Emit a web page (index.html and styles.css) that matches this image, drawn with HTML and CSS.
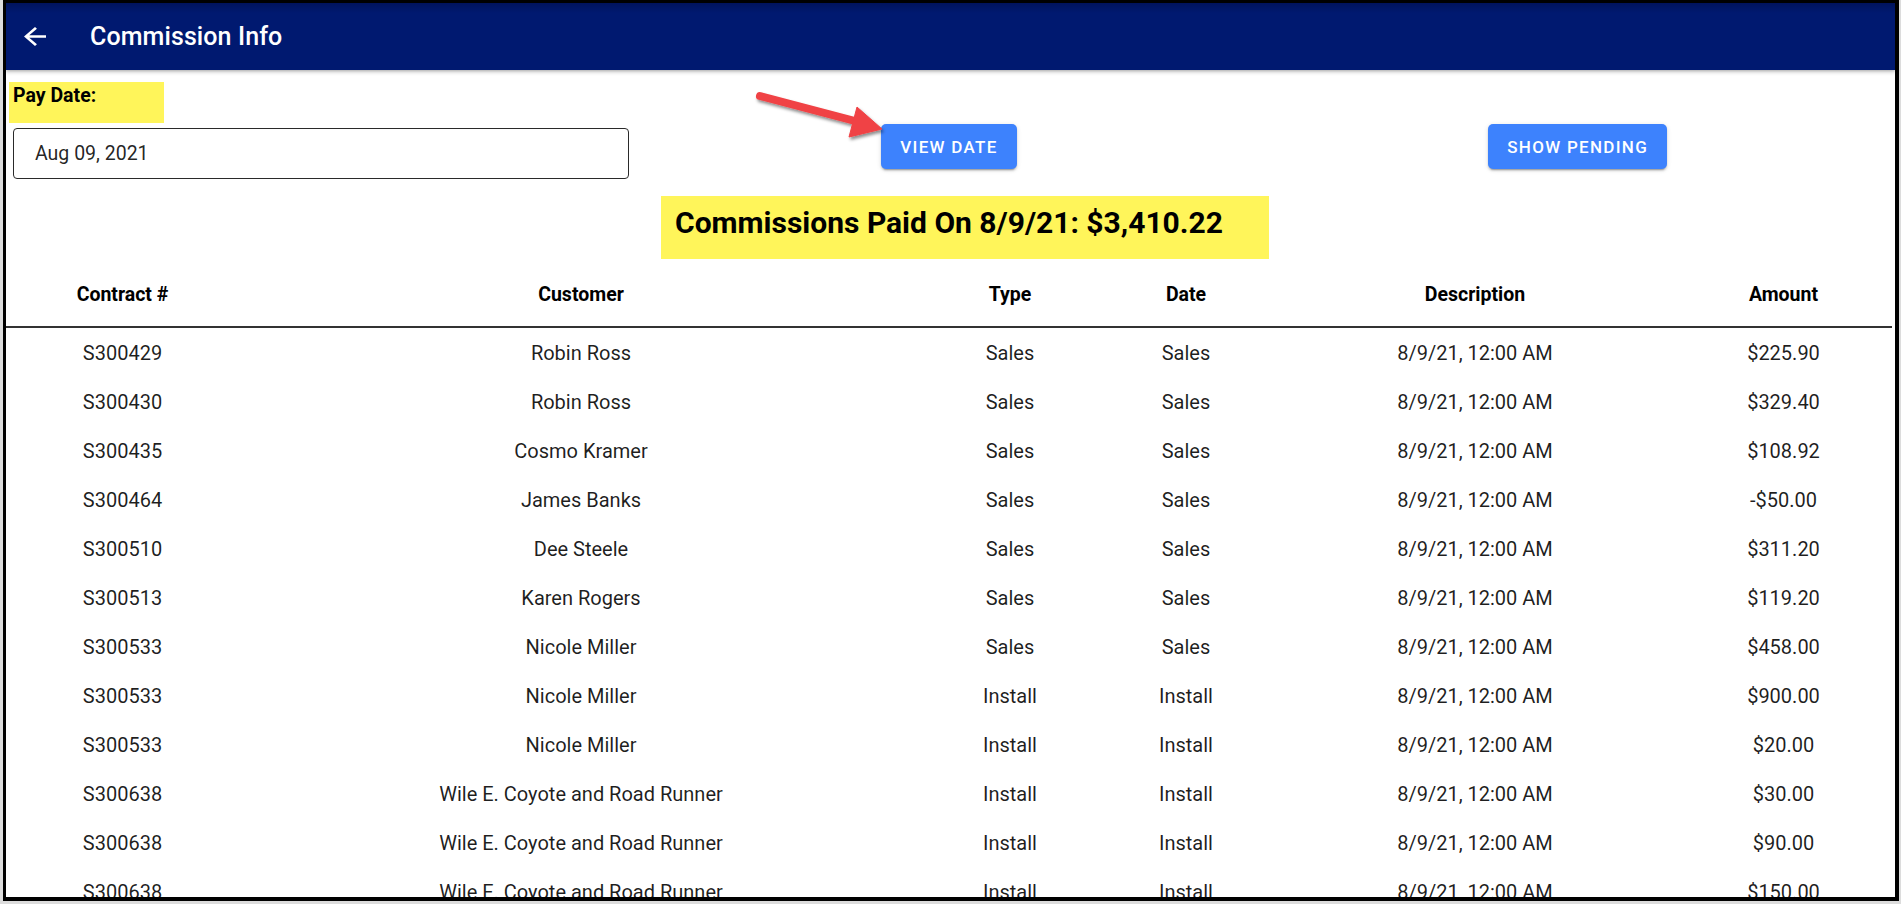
FILE: index.html
```html
<!DOCTYPE html>
<html lang="en">
<head>
<meta charset="utf-8">
<title>Commission Info</title>
<link rel="stylesheet" href="styles.css">
</head>
<body>
<div class="frame">
  <header class="toolbar">
    <svg class="back-icon" viewBox="4 4 16 16" preserveAspectRatio="none" width="22" height="19" aria-hidden="true">
      <path d="M20 11H7.83l5.59-5.59L12 4l-8 8 8 8 1.41-1.41L7.83 13H20v-2z" fill="#ffffff"/>
    </svg>
    <span class="title">Commission Info</span>
  </header>
  <main class="content">
    <div class="controls">
      <div class="date-col">
        <div class="label-wrap"><span class="label">Pay Date:</span></div>
        <div class="date-input">Aug 09, 2021</div>
      </div>
      <div class="btn-col"><button class="btn">VIEW DATE</button></div>
      <div class="btn-col"><button class="btn">SHOW PENDING</button></div>
    </div>
    <div class="heading-row">
      <h2 class="heading">Commissions Paid On 8/9/21: $3,410.22</h2>
    </div>
    <table class="table">
      <colgroup>
        <col class="c-contract"><col class="c-customer"><col class="c-type"><col class="c-date"><col class="c-desc"><col class="c-amount">
      </colgroup>
      <thead>
        <tr><th>Contract #</th><th>Customer</th><th>Type</th><th>Date</th><th>Description</th><th>Amount</th></tr>
      </thead>
      <tbody>
        <tr><td>S300429</td><td>Robin Ross</td><td>Sales</td><td>Sales</td><td>8/9/21, 12:00 AM</td><td>$225.90</td></tr>
        <tr><td>S300430</td><td>Robin Ross</td><td>Sales</td><td>Sales</td><td>8/9/21, 12:00 AM</td><td>$329.40</td></tr>
        <tr><td>S300435</td><td>Cosmo Kramer</td><td>Sales</td><td>Sales</td><td>8/9/21, 12:00 AM</td><td>$108.92</td></tr>
        <tr><td>S300464</td><td>James Banks</td><td>Sales</td><td>Sales</td><td>8/9/21, 12:00 AM</td><td>-$50.00</td></tr>
        <tr><td>S300510</td><td>Dee Steele</td><td>Sales</td><td>Sales</td><td>8/9/21, 12:00 AM</td><td>$311.20</td></tr>
        <tr><td>S300513</td><td>Karen Rogers</td><td>Sales</td><td>Sales</td><td>8/9/21, 12:00 AM</td><td>$119.20</td></tr>
        <tr><td>S300533</td><td>Nicole Miller</td><td>Sales</td><td>Sales</td><td>8/9/21, 12:00 AM</td><td>$458.00</td></tr>
        <tr><td>S300533</td><td>Nicole Miller</td><td>Install</td><td>Install</td><td>8/9/21, 12:00 AM</td><td>$900.00</td></tr>
        <tr><td>S300533</td><td>Nicole Miller</td><td>Install</td><td>Install</td><td>8/9/21, 12:00 AM</td><td>$20.00</td></tr>
        <tr><td>S300638</td><td>Wile E. Coyote and Road Runner</td><td>Install</td><td>Install</td><td>8/9/21, 12:00 AM</td><td>$30.00</td></tr>
        <tr><td>S300638</td><td>Wile E. Coyote and Road Runner</td><td>Install</td><td>Install</td><td>8/9/21, 12:00 AM</td><td>$90.00</td></tr>
        <tr><td>S300638</td><td>Wile E. Coyote and Road Runner</td><td>Install</td><td>Install</td><td>8/9/21, 12:00 AM</td><td>$150.00</td></tr>
      </tbody>
    </table>
  </main>
  <svg class="annot-arrow" viewBox="0 0 160 65" width="160" height="65" aria-hidden="true">
    <defs>
      <filter id="sh" x="-20%" y="-40%" width="140%" height="180%">
        <feDropShadow dx="1.5" dy="2.5" stdDeviation="1.6" flood-color="#000" flood-opacity="0.45"/>
      </filter>
    </defs>
    <g filter="url(#sh)" fill="#f04245" stroke="#f04245">
      <line x1="20" y1="16" x2="115" y2="41" stroke-width="8" stroke-linecap="round"/>
      <polygon points="142,49 117,27 109,57" stroke-width="1" stroke-linejoin="round"/>
    </g>
  </svg>
</div>
</body>
</html>
```

FILE: styles.css
```css
html, body {
  margin: 0;
  padding: 0;
}
body {
  background: #dcdcdc;
  font-family: Roboto, "Noto Sans", "Liberation Sans", sans-serif;
  color: rgba(0, 0, 0, 0.9);
  overflow: hidden;
}
.frame {
  position: relative;
  margin-left: 3px;
  width: 1889px;
  height: 894px;
  border-style: solid;
  border-color: #000;
  border-width: 3px 4px 4px 3px;
  background: #fff;
  overflow: hidden;
}
.toolbar {
  height: 67px;
  background: #001970;
  background-image: linear-gradient(to bottom, #00135c 0, #001970 10px);
  display: flex;
  align-items: center;
  padding-left: 18px;
  box-shadow: 0 2px 4px rgba(0, 0, 0, 0.22), 0 1px 2px rgba(0, 0, 0, 0.12);
  position: relative;
  z-index: 1;
}
.back-icon {
  display: block;
  flex: none;
}
.title {
  margin-left: 44px;
  color: #fff;
  font-size: 25px;
  font-weight: 500;
  letter-spacing: 0.1px;
}
.content {
  padding: 12px 3px 0 0;
}
.controls {
  display: grid;
  grid-template-columns: 1fr 1fr 1fr;
}
.label-wrap {
  margin-left: 3px;
}
.label {
  display: inline-block;
  background: #fff55a;
  font-size: 19.5px;
  font-weight: 700;
  line-height: 22px;
  padding: 3px 68px 16px 4px;
  color: #000;
}
.date-input {
  box-sizing: border-box;
  margin: 5px 6px 0 7px;
  height: 51px;
  border: 1px solid #2a2a2a;
  border-radius: 4px;
  padding-left: 21px;
  display: flex;
  align-items: center;
  font-size: 19.5px;
  color: rgba(0, 0, 0, 0.87);
}
.btn-col {
  display: flex;
  justify-content: center;
  align-items: flex-start;
}
.btn {
  margin-top: 42px;
  height: 45px;
  padding: 0 19px;
  border: 0;
  border-radius: 5px;
  background: #3d82fd;
  color: #fff;
  font-family: Roboto, "Noto Sans", sans-serif;
  font-size: 17px;
  font-weight: 500;
  letter-spacing: 1.3px;
  box-shadow: 0 3px 1px -2px rgba(0, 0, 0, 0.2), 0 2px 2px 0 rgba(0, 0, 0, 0.14), 0 1px 5px 0 rgba(0, 0, 0, 0.12);
}
.heading-row {
  display: flex;
  justify-content: center;
  margin-top: 17px;
}
.heading {
  margin: 0 0 0 32px;
  background: #fff55a;
  font-size: 30px;
  font-weight: 700;
  line-height: 35px;
  padding: 9px 46px 19px 14px;
  color: #000;
}
.table {
  margin-top: 3px;
  width: 1886px;
  table-layout: fixed;
  border-collapse: collapse;
}
.c-contract { width: 233px; }
.c-customer { width: 684px; }
.c-type { width: 174px; }
.c-date { width: 178px; }
.c-desc { width: 400px; }
.c-amount { width: 217px; }
.table th {
  height: 64px;
  padding: 0;
  font-size: 19.5px;
  font-weight: 700;
  text-align: center;
  vertical-align: middle;
  border-bottom: 2px solid #333;
  color: #000;
}
.table td {
  height: 49px;
  padding: 0;
  font-size: 20px;
  text-align: center;
  vertical-align: middle;
  color: rgba(0, 0, 0, 0.88);
  white-space: nowrap;
}
.annot-arrow {
  position: absolute;
  left: 734px;
  top: 77px;
  z-index: 2;
}
```
